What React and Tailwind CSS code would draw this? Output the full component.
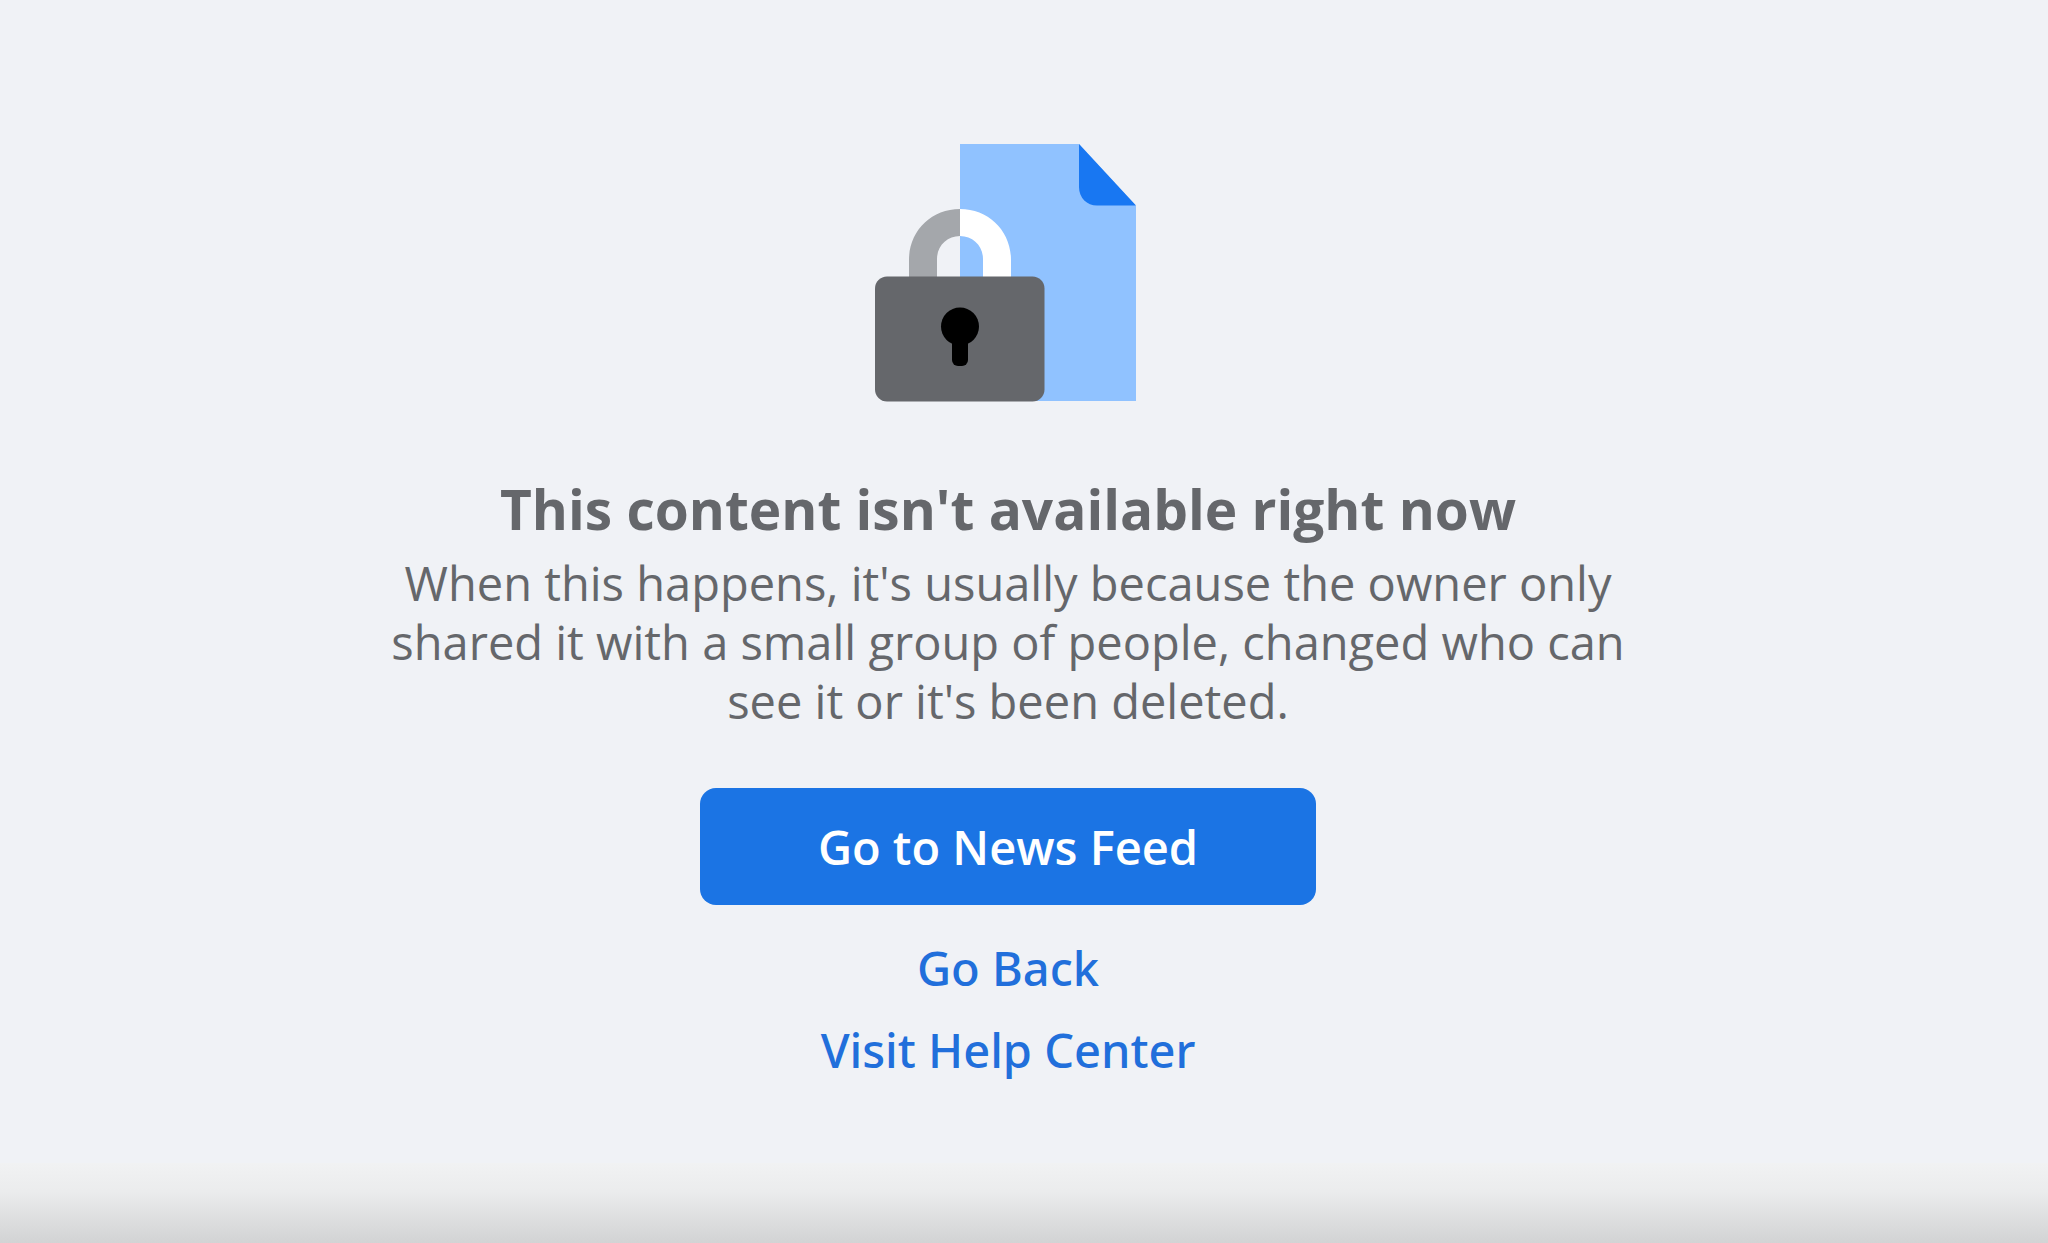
function LockedDocument() {
  return (
    <svg viewBox="0 0 266 259" className="h-[259px] w-[266px]" aria-hidden="true">
      <path d="M85 1h119l57 62v195H85z" fill="#90c2ff" />
      <path d="M204 1v43c0 11 8 18.500 18 18.500h39z" fill="#1877f2" />
      {/* shackle: grey half over the page, white half over the document */}
      <path d="M34 134v-17c0-29 22-51 51-51v27c-13 0-23 10-23 23v18z" fill="#a4a7ab" />
      <path d="M136 134v-17c0-29-22-51-51-51v27c13 0 23 10 23 23v18z" fill="#fff" />
      <rect y="133.500" width="169.500" height="125" rx="12" fill="#65676b" />
      <circle cx="85" cy="183.500" r="19" />
      <rect x="77" y="186" width="16" height="37" rx="6" />
    </svg>
  );
}

export default function App() {
  return (
    <div className="flex min-h-screen flex-col bg-[#f0f2f6] font-['Open_Sans','Noto_Sans',sans-serif] text-[#65676b]">
      <main className="flex grow flex-col items-center pt-[143px] pr-8 text-center">
        <LockedDocument />

        <h1 className="mt-[72px] text-[55px] leading-[70px] font-bold">This content isn't available right now</h1>
        <p className="mt-2.5 max-w-[1260px] text-[47px] leading-[59px]">
          When this happens, it's usually because the owner only shared it with a small group of people, changed who can
          see it or it's been deleted.
        </p>

        <button
          type="button"
          className="mt-[57px] h-[117px] w-[616px] rounded-2xl bg-[#1b74e4] pt-0.5 text-[47px] leading-[59px] font-semibold text-white hover:bg-[#1a6ed8]"
        >
          Go to News Feed
        </button>

        <nav className="mt-[34px] flex flex-col items-center gap-[23px] font-['Noto_Sans','Open_Sans',sans-serif] text-[47px] leading-[59px] font-medium text-[#216fdb]">
          <a href="#back" className="hover:underline">Go Back</a>
          <a href="#help" className="hover:underline">Visit Help Center</a>
        </nav>
      </main>

      <div className="h-20 bg-linear-to-b from-[#f1f2f3] via-[#ebeced] via-35% to-[#d2d3d4]" />
    </div>
  );
}
